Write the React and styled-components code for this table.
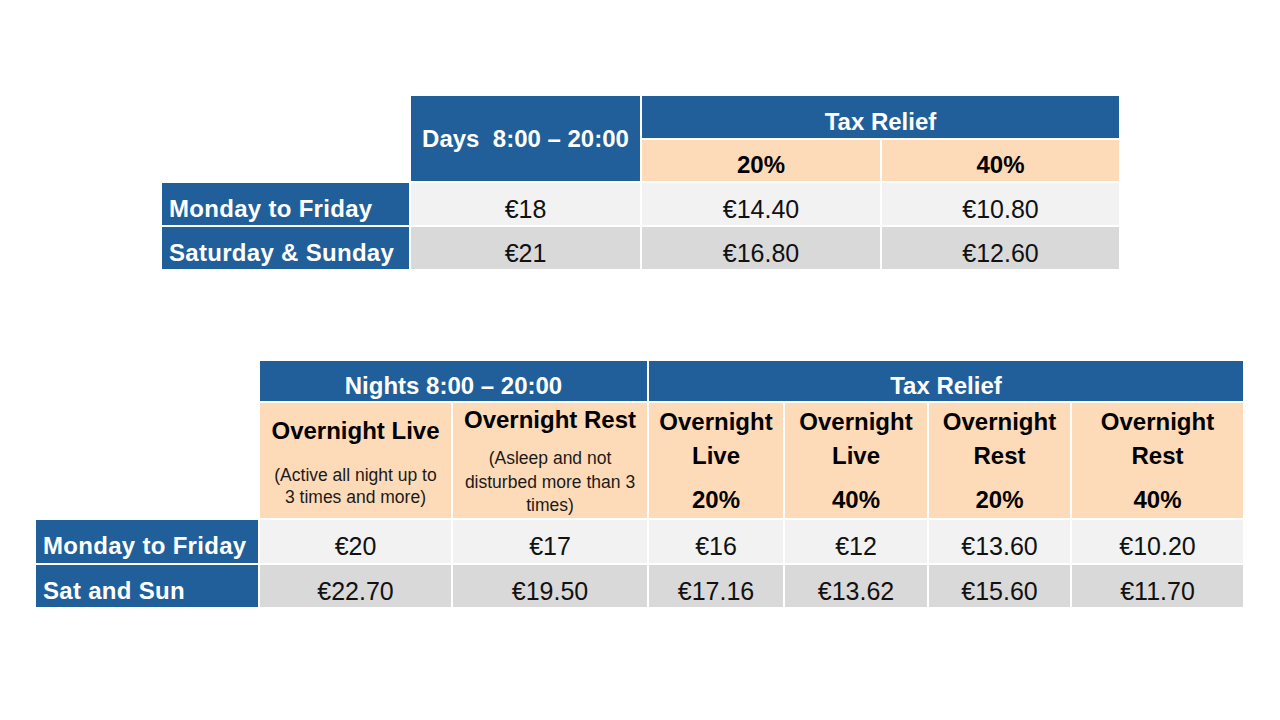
import { Fragment } from "react";
import styled, { createGlobalStyle } from "styled-components";

const GlobalStyle = createGlobalStyle`
  body {
    margin: 0;
    background: #ffffff;
    font-family: "Liberation Sans", Arial, sans-serif;
  }
`;

// colours taken from the slide
const tones = {
  blue: { bg: "#215f9a", fg: "#ffffff" },
  peach: { bg: "#fedbb8", fg: "#000000" },
  light: { bg: "#f2f2f2", fg: "#111111" },
  mid: { bg: "#d9d9d9", fg: "#111111" },
  none: { bg: "transparent", fg: "#000000" },
};

const Page = styled.div`
  width: 1280px;
  height: 720px;
  padding-top: 96px;
  box-sizing: border-box;
  display: flex;
  flex-direction: column;
  gap: 92px;
`;

const Grid = styled.div`
  display: grid;
  grid-template-columns: ${(p) => p.$cols};
  grid-template-rows: ${(p) => p.$rows};
  gap: 2px;
  margin-left: ${(p) => p.$left}px;
  background: #ffffff;
`;

const Cell = styled.div`
  display: flex;
  flex-direction: column;
  align-items: ${(p) => (p.$left ? "flex-start" : "center")};
  justify-content: center;
  text-align: center;
  box-sizing: border-box;
  padding: ${(p) => (p.$pad ? "9px 0 0 0" : "0")};
  padding-left: ${(p) => (p.$left ? "7px" : "0")};
  background: ${(p) => tones[p.$tone || "none"].bg};
  color: ${(p) => tones[p.$tone || "none"].fg};
  font-size: ${(p) => (p.$bold ? "24px" : "25px")};
  font-weight: ${(p) => (p.$bold ? 700 : 400)};
  letter-spacing: ${(p) => (p.$left ? "0.3px" : "0")};
  line-height: 30px;
  white-space: nowrap;
  grid-column: ${(p) => (p.$span ? `span ${p.$span}` : "auto")};
  grid-row: ${(p) => (p.$rowSpan ? `span ${p.$rowSpan}` : "auto")};
`;

const Title = styled.div`
  font-size: 24px;
  font-weight: 700;
  line-height: 34px;
  white-space: nowrap;
  margin-top: ${(p) => p.$gap || 0}px;
`;

const Note = styled.div`
  font-size: 17.5px;
  font-weight: 400;
  color: #1a1a1a;
  line-height: ${(p) => p.$lh || 22}px;
  margin-top: ${(p) => p.$gap || 0}px;
  white-space: nowrap;
`;

const daysRows = [
  { label: "Monday to Friday", tone: "light", values: ["€18", "€14.40", "€10.80"] },
  { label: "Saturday & Sunday", tone: "mid", values: ["€21", "€16.80", "€12.60"] },
];

const nightRows = [
  {
    label: "Monday to Friday",
    tone: "light",
    values: ["€20", "€17", "€16", "€12", "€13.60", "€10.20"],
  },
  {
    label: "Sat and Sun",
    tone: "mid",
    values: ["€22.70", "€19.50", "€17.16", "€13.62", "€15.60", "€11.70"],
  },
];

const reliefCols = [
  { name: "Live", pct: "20%" },
  { name: "Live", pct: "40%" },
  { name: "Rest", pct: "20%" },
  { name: "Rest", pct: "40%" },
];

const App = () => {
  return (
    <>
      <GlobalStyle />
      <Page>
        {/* day rates */}
        <Grid $left={162} $cols="247px 229px 238px 237px" $rows="42px 41px 42px 42px">
          <Cell $rowSpan={2} />
          <Cell $tone="blue" $bold $rowSpan={2}>
            Days&nbsp; 8:00 – 20:00
          </Cell>
          <Cell $tone="blue" $bold $span={2} $pad>
            Tax Relief
          </Cell>
          <Cell $tone="peach" $bold $pad>
            20%
          </Cell>
          <Cell $tone="peach" $bold $pad>
            40%
          </Cell>
          {daysRows.map((row) => (
            <Fragment key={row.label}>
              <Cell $tone="blue" $bold $left $pad>
                {row.label}
              </Cell>
              {row.values.map((v, i) => (
                <Cell key={i} $tone={row.tone} $pad>
                  {v}
                </Cell>
              ))}
            </Fragment>
          ))}
        </Grid>

        {/* night rates */}
        <Grid
          $left={36}
          $cols="222px 191px 194px 134px 142px 141px 171px"
          $rows="40px 115px 43px 42px"
        >
          <Cell $rowSpan={2} />
          <Cell $tone="blue" $bold $span={2} $pad>
            Nights 8:00 – 20:00
          </Cell>
          <Cell $tone="blue" $bold $span={4} $pad>
            Tax Relief
          </Cell>
          <Cell $tone="peach">
            <Title>Overnight Live</Title>
            <Note $gap={16}>
              (Active all night up to
              <br />3 times and more)
            </Note>
          </Cell>
          <Cell $tone="peach">
            <Title>Overnight Rest</Title>
            <Note $gap={10} $lh={23.5}>
              (Asleep and not
              <br />
              disturbed more than 3
              <br />
              times)
            </Note>
          </Cell>
          {reliefCols.map((c, i) => (
            <Cell key={i} $tone="peach">
              <Title>Overnight</Title>
              <Title>{c.name}</Title>
              <Title $gap={10}>{c.pct}</Title>
            </Cell>
          ))}
          {nightRows.map((row) => (
            <Fragment key={row.label}>
              <Cell $tone="blue" $bold $left $pad>
                {row.label}
              </Cell>
              {row.values.map((v, i) => (
                <Cell key={i} $tone={row.tone} $pad>
                  {v}
                </Cell>
              ))}
            </Fragment>
          ))}
        </Grid>
      </Page>
    </>
  );
};

export default App;
